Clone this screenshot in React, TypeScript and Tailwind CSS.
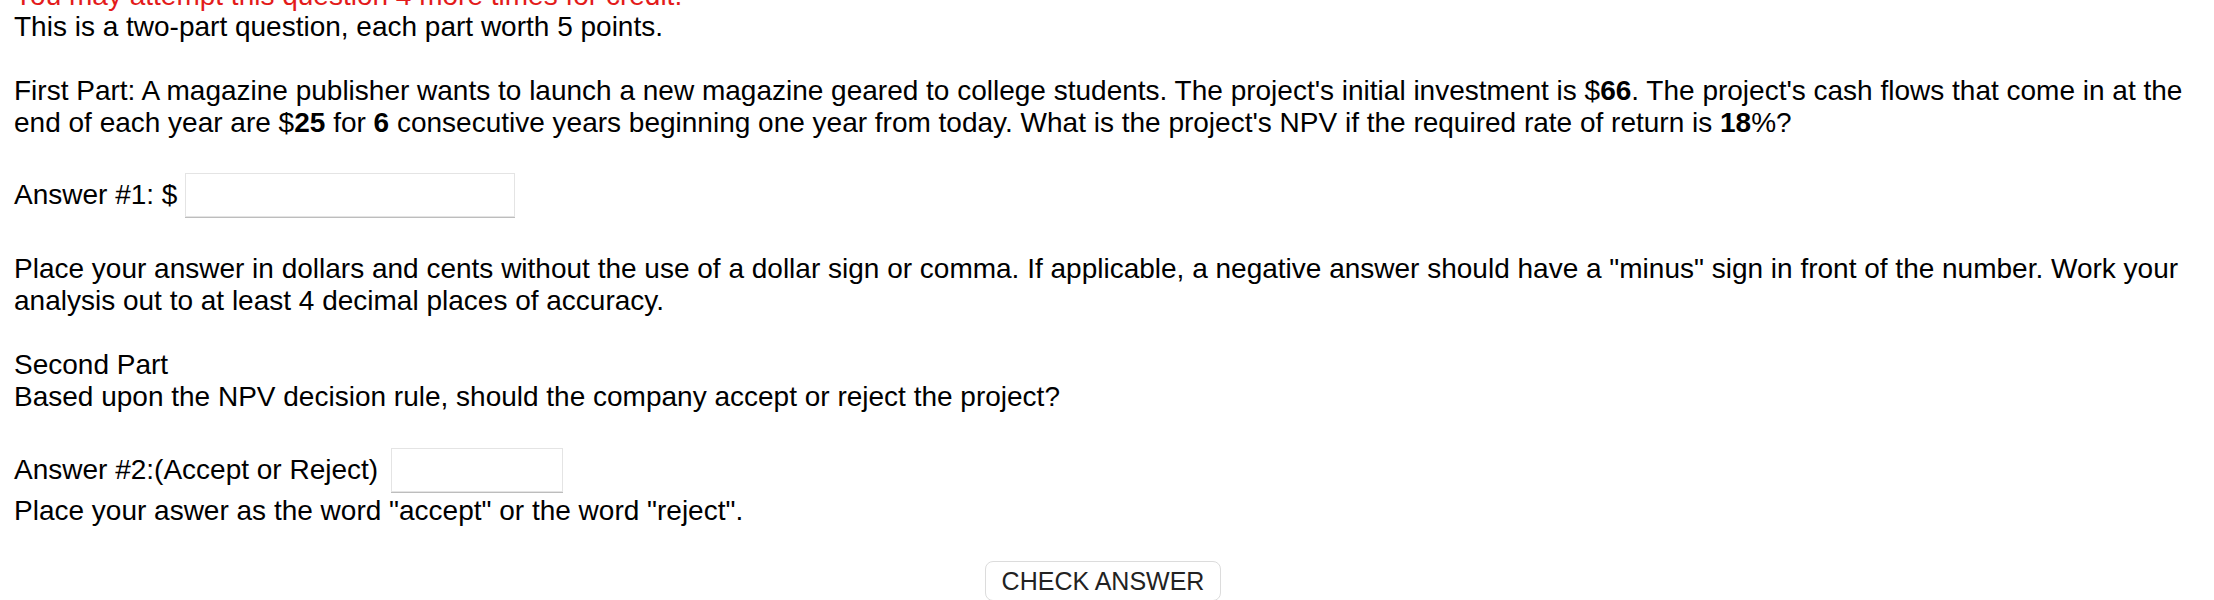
import React, { useState } from 'react';

const App: React.FC = () => {
  const [answerOne, setAnswerOne] = useState('');
  const [answerTwo, setAnswerTwo] = useState('');

  return (
    <div className="min-h-screen bg-white overflow-hidden">
      <div className="pl-[14px] pr-[14px] text-[28px] leading-[32px] text-black font-['Liberation_Sans',Arial,sans-serif]">
        {/* Attempts notice, scrolled mostly out of view */}
        <p className="-mt-[19px] leading-[30px] text-[#e31b1b]">You may attempt this question 4 more times for credit.</p>
        <p>This is a two-part question, each part worth 5 points.</p>

        <p className="mt-[32px]">
          First Part: A magazine publisher wants to launch a new magazine geared to college students. The project's
          initial investment is $<b>66</b>. The project's cash flows that come in at the end of each year are $
          <b>25</b> for <b>6</b> consecutive years beginning one year from today. What is the project's NPV if the
          required rate of return is <b>18</b>%?
        </p>

        <div className="mt-[34px] flex items-center h-[44px]">
          <span>Answer #1: $</span>
          <input
            type="text"
            value={answerOne}
            onChange={(e) => setAnswerOne(e.target.value)}
            className="ml-[8px] w-[330px] h-[44px] border border-[#e4e4e4] shadow-[0_1px_0_#bdbdbd] bg-white outline-none px-2"
          />
        </div>

        <p className="mt-[36px]">
          Place your answer in dollars and cents without the use of a dollar sign or comma. If applicable, a negative
          answer should have a "minus" sign in front of the number. Work your analysis out to at least 4 decimal places
          of accuracy.
        </p>

        <p className="mt-[32px]">Second Part</p>
        <p>Based upon the NPV decision rule, should the company accept or reject the project?</p>

        <div className="mt-[35px] flex items-center h-[44px]">
          <span>Answer #2:(Accept or Reject)</span>
          <input
            type="text"
            value={answerTwo}
            onChange={(e) => setAnswerTwo(e.target.value)}
            className="ml-[13px] w-[172px] h-[44px] border border-[#e4e4e4] shadow-[0_1px_0_#bdbdbd] bg-white outline-none px-2"
          />
        </div>
        <p className="mt-[3px]">Place your aswer as the word "accept" or the word "reject".</p>

        <div className="mt-[34px] flex justify-center pr-[8px]">
          <button
            type="button"
            className="h-[40px] px-[16px] rounded-[8px] border border-[#dcdcdc] bg-white text-[#222] text-[25px] leading-[30px] font-['Liberation_Sans',Arial,sans-serif]"
          >
            CHECK ANSWER
          </button>
        </div>
      </div>
    </div>
  );
};

export default App;
